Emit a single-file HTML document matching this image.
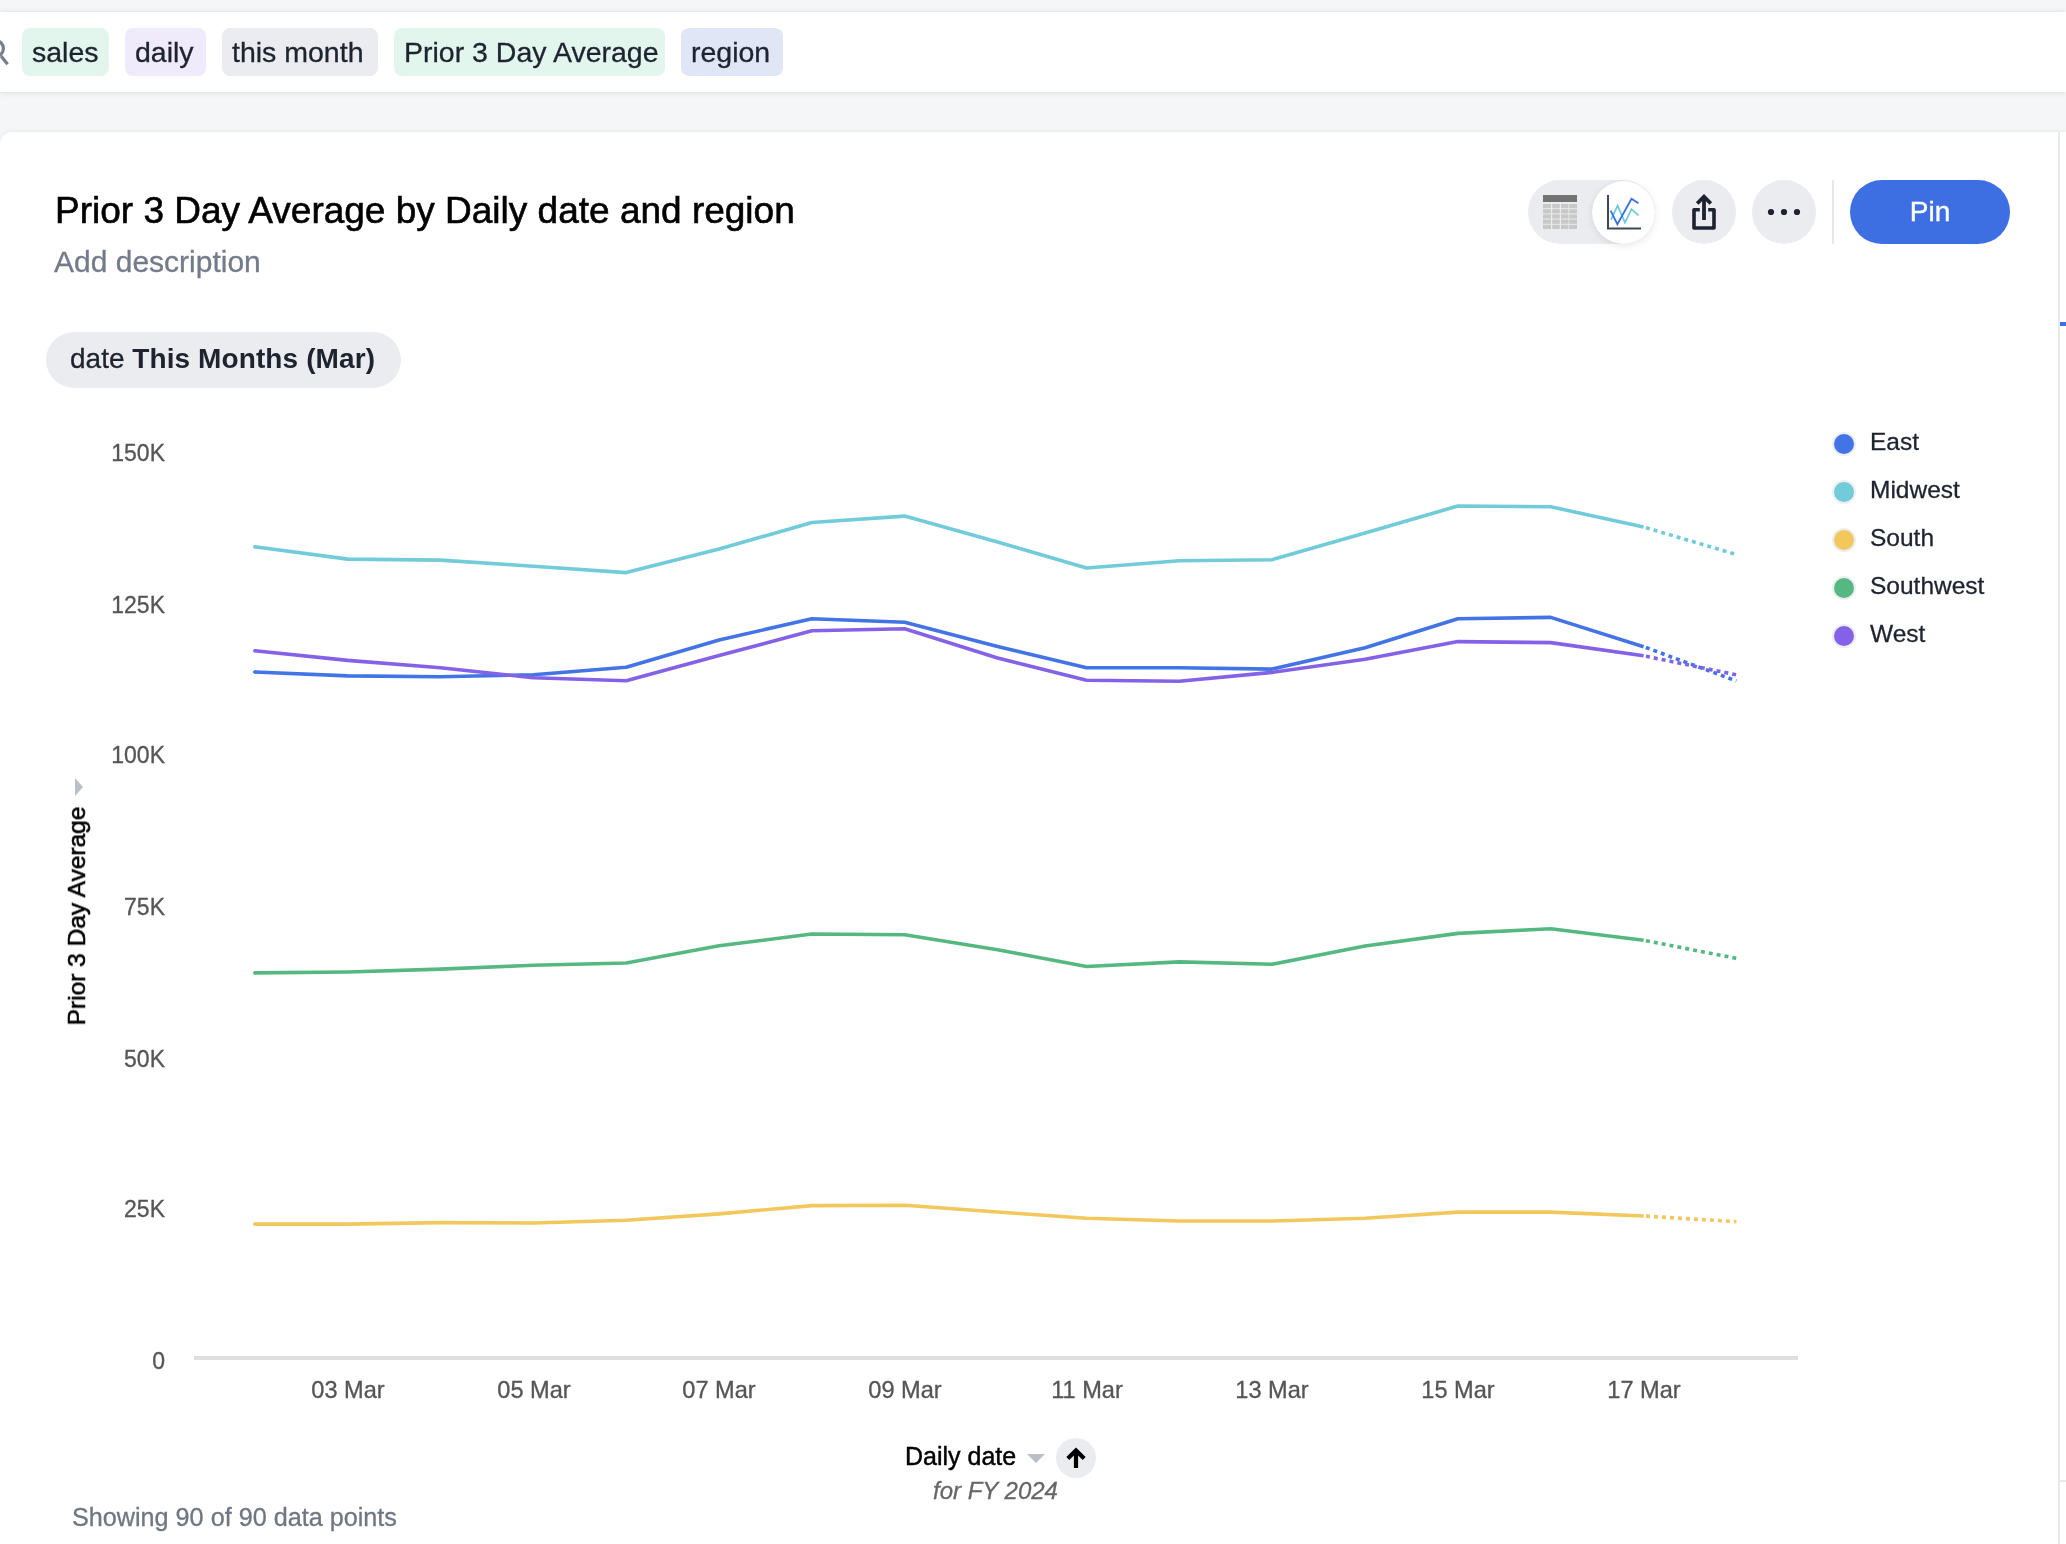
<!DOCTYPE html>
<html><head><meta charset="utf-8">
<style>
*{margin:0;padding:0;box-sizing:border-box;}
body *{will-change:transform;-webkit-text-stroke-width:0.3px;}
html,body{width:2066px;height:1544px;overflow:hidden;background:#f5f6f8;font-family:"Liberation Sans",sans-serif;color:#1d232f;}
#topbar{position:absolute;left:0;top:12px;width:2066px;height:80px;background:#fff;box-shadow:0 -1px 4px rgba(0,0,0,0.07),0 2px 5px rgba(0,0,0,0.07);}
.chip{position:absolute;top:16px;height:48px;border-radius:8px;font-size:28.5px;line-height:49px;padding:0 10px;color:#1d232f;white-space:nowrap;}
#card{position:absolute;left:0;top:132px;width:2066px;height:1412px;background:#fff;border-top-left-radius:12px;box-shadow:0 -1px 4px rgba(0,0,0,0.06);}
#rline{position:absolute;left:2058px;top:132px;width:2px;height:1412px;background:#e8e9ed;}
#rmark{position:absolute;left:2060px;top:322px;width:6px;height:4px;background:#3d6fe3;}
#title{position:absolute;left:54.5px;top:190px;-webkit-text-stroke:0.6px #000;font-size:37px;line-height:42px;color:#000;white-space:nowrap;}
#desc{position:absolute;left:54px;top:246px;font-size:30px;line-height:32px;color:#737b8a;white-space:nowrap;}
#filter{position:absolute;left:46px;top:332px;height:56px;border-radius:28px;background:#ebecef;font-size:28px;line-height:54px;padding:0 26px 0 24px;white-space:nowrap;color:#1d232f;}
#filter b{font-weight:bold;-webkit-text-stroke-width:0;letter-spacing:0.1px;}
.ylab{position:absolute;left:60px;width:105px;text-align:right;font-size:23px;line-height:28px;color:#555;}
.xlab{position:absolute;top:1376px;width:120px;text-align:center;font-size:23.6px;line-height:28px;color:#555;}
#axis{position:absolute;left:194px;top:1356px;width:1604px;height:4px;background:#dedede;}
svg#plot{position:absolute;left:0;top:0;}
svg#plot path{fill:none;stroke-width:3.6;stroke-linejoin:round;stroke-linecap:butt;}
.leg{position:absolute;left:1830px;height:36px;white-space:nowrap;}
.dot{position:absolute;left:4px;top:10px;width:20px;height:20px;border-radius:50%;box-shadow:0 0 0 2px #eceef2;}
.lt{position:absolute;left:40px;top:0;font-size:24.5px;line-height:36px;color:#1d232f;}
#ytitle{position:absolute;left:77px;top:915.5px;transform:translate(-50%,-50%) rotate(-90deg);-webkit-text-stroke:0.6px #000;font-size:24.5px;line-height:28px;color:#000;white-space:nowrap;}
#ytri{position:absolute;left:75px;top:777.5px;width:0;height:0;border-top:9px solid transparent;border-bottom:9px solid transparent;border-left:8px solid #b9bec7;}
#xtitle{position:absolute;left:905px;top:1441px;-webkit-text-stroke:0.45px #000;font-size:25px;line-height:30px;color:#000;white-space:nowrap;}
#xtri{position:absolute;left:1027px;top:1454px;width:0;height:0;border-left:9px solid transparent;border-right:9px solid transparent;border-top:9px solid #b9bec7;}
#sortbtn{position:absolute;left:1056px;top:1438px;width:40px;height:40px;border-radius:50%;background:#ebecef;}
#fy{position:absolute;left:933px;top:1476px;font-size:24px;line-height:30px;font-style:italic;color:#666;white-space:nowrap;}
#showing{position:absolute;left:72px;top:1502px;font-size:25.2px;line-height:30px;color:#6f7683;white-space:nowrap;}
.tb{position:absolute;top:180px;height:64px;border-radius:32px;background:#ebecef;}
#knob{position:absolute;left:1592px;top:180.5px;width:63px;height:63px;border-radius:50%;background:#fff;box-shadow:0 2px 7px rgba(30,40,60,0.10),0 0 1px rgba(30,40,60,0.10);}
#pin{position:absolute;left:1850px;top:180px;width:160px;height:64px;border-radius:32px;background:#3d6fe3;color:#fff;-webkit-text-stroke:0.4px #fff;font-size:28px;line-height:64px;text-align:center;}
#divider{position:absolute;left:1832px;top:180px;width:2px;height:64px;background:#e6e8ec;}
</style></head><body>
<div id="topbar">
  <div class="chip" style="left:22px;width:87px;background:#e3f6ee;">sales</div>
  <div class="chip" style="left:125px;width:81px;background:#efebfb;">daily</div>
  <div class="chip" style="left:222px;width:156px;background:#ebecef;">this month</div>
  <div class="chip" style="left:394px;width:271px;background:#e3f6ee;">Prior 3 Day Average</div>
  <div class="chip" style="left:681px;width:102px;background:#e1e6f6;">region</div>
</div>
<div id="card"></div>
<svg style="position:absolute;left:0;top:0" width="20" height="80"><circle cx="-5" cy="48.5" r="8.4" fill="none" stroke="#777e8b" stroke-width="3.2"/><line x1="1.2" y1="56.2" x2="7.6" y2="64.2" stroke="#777e8b" stroke-width="3.2"/></svg>
<div id="rline"></div>
<div id="rmark"></div>
<div style="position:absolute;left:2060px;top:1480px;width:6px;height:2px;background:#e8e9ed;"></div>
<div id="title">Prior 3 Day Average by Daily date and region</div>
<div id="desc">Add description</div>
<div id="filter">date <b>This Months (Mar)</b></div>

<div class="tb" style="left:1528px;width:127px;"></div>
<div id="knob"></div>
<div class="tb" style="left:1672px;width:64px;"></div>
<div class="tb" style="left:1752px;width:64px;"></div>
<svg id="icons" width="2066" height="260" style="position:absolute;left:0;top:0">
  <!-- table icon -->
  <rect x="1543" y="195" width="34" height="7" fill="#737373"/>
  <g fill="#c8c8c8">
    <rect x="1543" y="204" width="8" height="4.2"/><rect x="1552.2" y="204" width="7.6" height="4.2"/><rect x="1561" y="204" width="7.4" height="4.2"/><rect x="1569.2" y="204" width="7.8" height="4.2"/>
    <rect x="1543" y="209.2" width="8" height="4.2"/><rect x="1552.2" y="209.2" width="7.6" height="4.2"/><rect x="1561" y="209.2" width="7.4" height="4.2"/><rect x="1569.2" y="209.2" width="7.8" height="4.2"/>
    <rect x="1543" y="214.4" width="8" height="4.2"/><rect x="1552.2" y="214.4" width="7.6" height="4.2"/><rect x="1561" y="214.4" width="7.4" height="4.2"/><rect x="1569.2" y="214.4" width="7.8" height="4.2"/>
    <rect x="1543" y="219.6" width="8" height="4.2"/><rect x="1552.2" y="219.6" width="7.6" height="4.2"/><rect x="1561" y="219.6" width="7.4" height="4.2"/><rect x="1569.2" y="219.6" width="7.8" height="4.2"/>
    <rect x="1543" y="224.8" width="8" height="4.2"/><rect x="1552.2" y="224.8" width="7.6" height="4.2"/><rect x="1561" y="224.8" width="7.4" height="4.2"/><rect x="1569.2" y="224.8" width="7.8" height="4.2"/>
  </g>
  <!-- line chart icon -->
  <path d="M1608 195 V228.5 H1641" fill="none" stroke="#3e4756" stroke-width="2" stroke-linecap="butt"/>
  <polyline points="1611,219.6 1617.6,205.6 1625,222.7 1631.5,209.1 1638.5,215.3" fill="none" stroke="#6fcbdc" stroke-width="1.8"/>
  <polyline points="1610.6,210.7 1617.4,224.2 1631.5,198.7 1638.5,203.3" fill="none" stroke="#3a6ee8" stroke-width="1.8"/>
  <!-- share icon -->
  <path d="M1699.8 209.8 H1694 V228 H1714 V209.8 H1708.2" fill="none" stroke="#1d2230" stroke-width="3.6" stroke-linejoin="round"/>
  <path d="M1704 220 V196" fill="none" stroke="#1d2230" stroke-width="3.8"/>
  <path d="M1697.2 203.5 L1704 196.7 L1710.8 203.5" fill="none" stroke="#1d2230" stroke-width="3.8" stroke-linecap="butt"/>
  <!-- more dots -->
  <circle cx="1771" cy="212" r="3.1" fill="#1d2230"/><circle cx="1784" cy="212" r="3.1" fill="#1d2230"/><circle cx="1797" cy="212" r="3.1" fill="#1d2230"/>
</svg>
<div id="divider"></div>
<div id="pin">Pin</div>

<div class="ylab" style="top:439px">150K</div>
<div class="ylab" style="top:591px">125K</div>
<div class="ylab" style="top:741px">100K</div>
<div class="ylab" style="top:893px">75K</div>
<div class="ylab" style="top:1045px">50K</div>
<div class="ylab" style="top:1195px">25K</div>
<div class="ylab" style="top:1347px">0</div>
<div id="axis"></div>
<div class="xlab" style="left:288px">03 Mar</div>
<div class="xlab" style="left:474px">05 Mar</div>
<div class="xlab" style="left:659px">07 Mar</div>
<div class="xlab" style="left:845px">09 Mar</div>
<div class="xlab" style="left:1027px">11 Mar</div>
<div class="xlab" style="left:1212px">13 Mar</div>
<div class="xlab" style="left:1398px">15 Mar</div>
<div class="xlab" style="left:1584px">17 Mar</div>
<svg id="plot" width="2066" height="1544">
<path d="M254.8 1224.1 L347.7 1224.1 L440.5 1222.6 L533.4 1223.0 L626.2 1220.2 L719.1 1213.9 L811.9 1205.6 L904.7 1205.2 L997.6 1212.0 L1086.5 1218.3 L1179.4 1221.0 L1272.2 1221.0 L1365.1 1218.2 L1457.9 1212.1 L1550.7 1212.1 L1643.6 1216.0" stroke="#f2c75c" />
<circle cx="254.8" cy="1224.1" r="1.8" fill="#f2c75c" />
<path d="M1643.6 1216.0 L1736.4 1221.7" stroke="#f2c75c" style="stroke-dasharray:4 4;stroke-dashoffset:5.6" />
<path d="M254.8 972.9 L347.7 972.0 L440.5 969.1 L533.4 965.2 L626.2 963.0 L719.1 945.8 L811.9 934.0 L904.7 934.8 L997.6 949.7 L1086.5 966.5 L1179.4 961.9 L1272.2 964.2 L1365.1 946.0 L1457.9 933.4 L1550.7 928.7 L1643.6 940.2" stroke="#56b881" />
<circle cx="254.8" cy="972.9" r="1.8" fill="#56b881" />
<path d="M1643.6 940.2 L1736.4 958.4" stroke="#56b881" style="stroke-dasharray:4 4;stroke-dashoffset:5.6" />
<path d="M254.8 546.7 L347.7 559.1 L440.5 560.1 L533.4 566.3 L626.2 572.6 L719.1 549.1 L811.9 522.5 L904.7 516.1 L997.6 541.9 L1086.5 568.0 L1179.4 560.7 L1272.2 559.7 L1365.1 533.0 L1457.9 506.0 L1550.7 506.8 L1643.6 527.0" stroke="#71cbd9" />
<circle cx="254.8" cy="546.7" r="1.8" fill="#71cbd9" />
<path d="M1643.6 527.0 L1736.4 554.5" stroke="#71cbd9" style="stroke-dasharray:4 4;stroke-dashoffset:5.6" />
<path d="M254.8 672.0 L347.7 675.9 L440.5 676.8 L533.4 674.8 L626.2 667.2 L719.1 640.0 L811.9 618.8 L904.7 622.2 L997.6 646.4 L1086.5 667.7 L1179.4 667.7 L1272.2 669.1 L1365.1 647.7 L1457.9 618.8 L1550.7 617.4 L1643.6 646.7" stroke="#4274e6" />
<circle cx="254.8" cy="672.0" r="1.8" fill="#4274e6" />
<path d="M1643.6 646.7 L1736.4 680.9" stroke="#4274e6" style="stroke-dasharray:4 4;stroke-dashoffset:5.6" />
<path d="M254.8 650.7 L347.7 660.4 L440.5 667.8 L533.4 677.8 L626.2 680.7 L719.1 655.5 L811.9 630.8 L904.7 628.8 L997.6 658.0 L1086.5 680.3 L1179.4 681.3 L1272.2 672.4 L1365.1 659.3 L1457.9 641.6 L1550.7 642.6 L1643.6 655.8" stroke="#8462e8" />
<circle cx="254.8" cy="650.7" r="1.8" fill="#8462e8" />
<path d="M1643.6 655.8 L1736.4 674.8" stroke="#8462e8" style="stroke-dasharray:4 4;stroke-dashoffset:5.6" />
</svg>
<div class="leg" style="top:424px"><span class="dot" style="background:#4274e6"></span><span class="lt">East</span></div>
<div class="leg" style="top:472px"><span class="dot" style="background:#71cbd9"></span><span class="lt">Midwest</span></div>
<div class="leg" style="top:520px"><span class="dot" style="background:#f2c75c"></span><span class="lt">South</span></div>
<div class="leg" style="top:568px"><span class="dot" style="background:#56b881"></span><span class="lt">Southwest</span></div>
<div class="leg" style="top:616px"><span class="dot" style="background:#8462e8"></span><span class="lt">West</span></div>
<div id="ytri"></div>
<div id="ytitle">Prior 3 Day Average</div>
<div id="xtitle">Daily date</div>
<div id="xtri"></div>
<div id="sortbtn"></div>
<svg style="position:absolute;left:1056px;top:1438px" width="40" height="40" viewBox="0 0 40 40"><path d="M20 13 V30" stroke="#000" stroke-width="4.2" fill="none"/><path d="M11.8 20.4 L20 12.5 L28.2 20.4" stroke="#000" stroke-width="4.2" fill="none" stroke-linecap="butt"/></svg>
<div id="fy">for FY 2024</div>
<div id="showing">Showing 90 of 90 data points</div>
</body></html>
